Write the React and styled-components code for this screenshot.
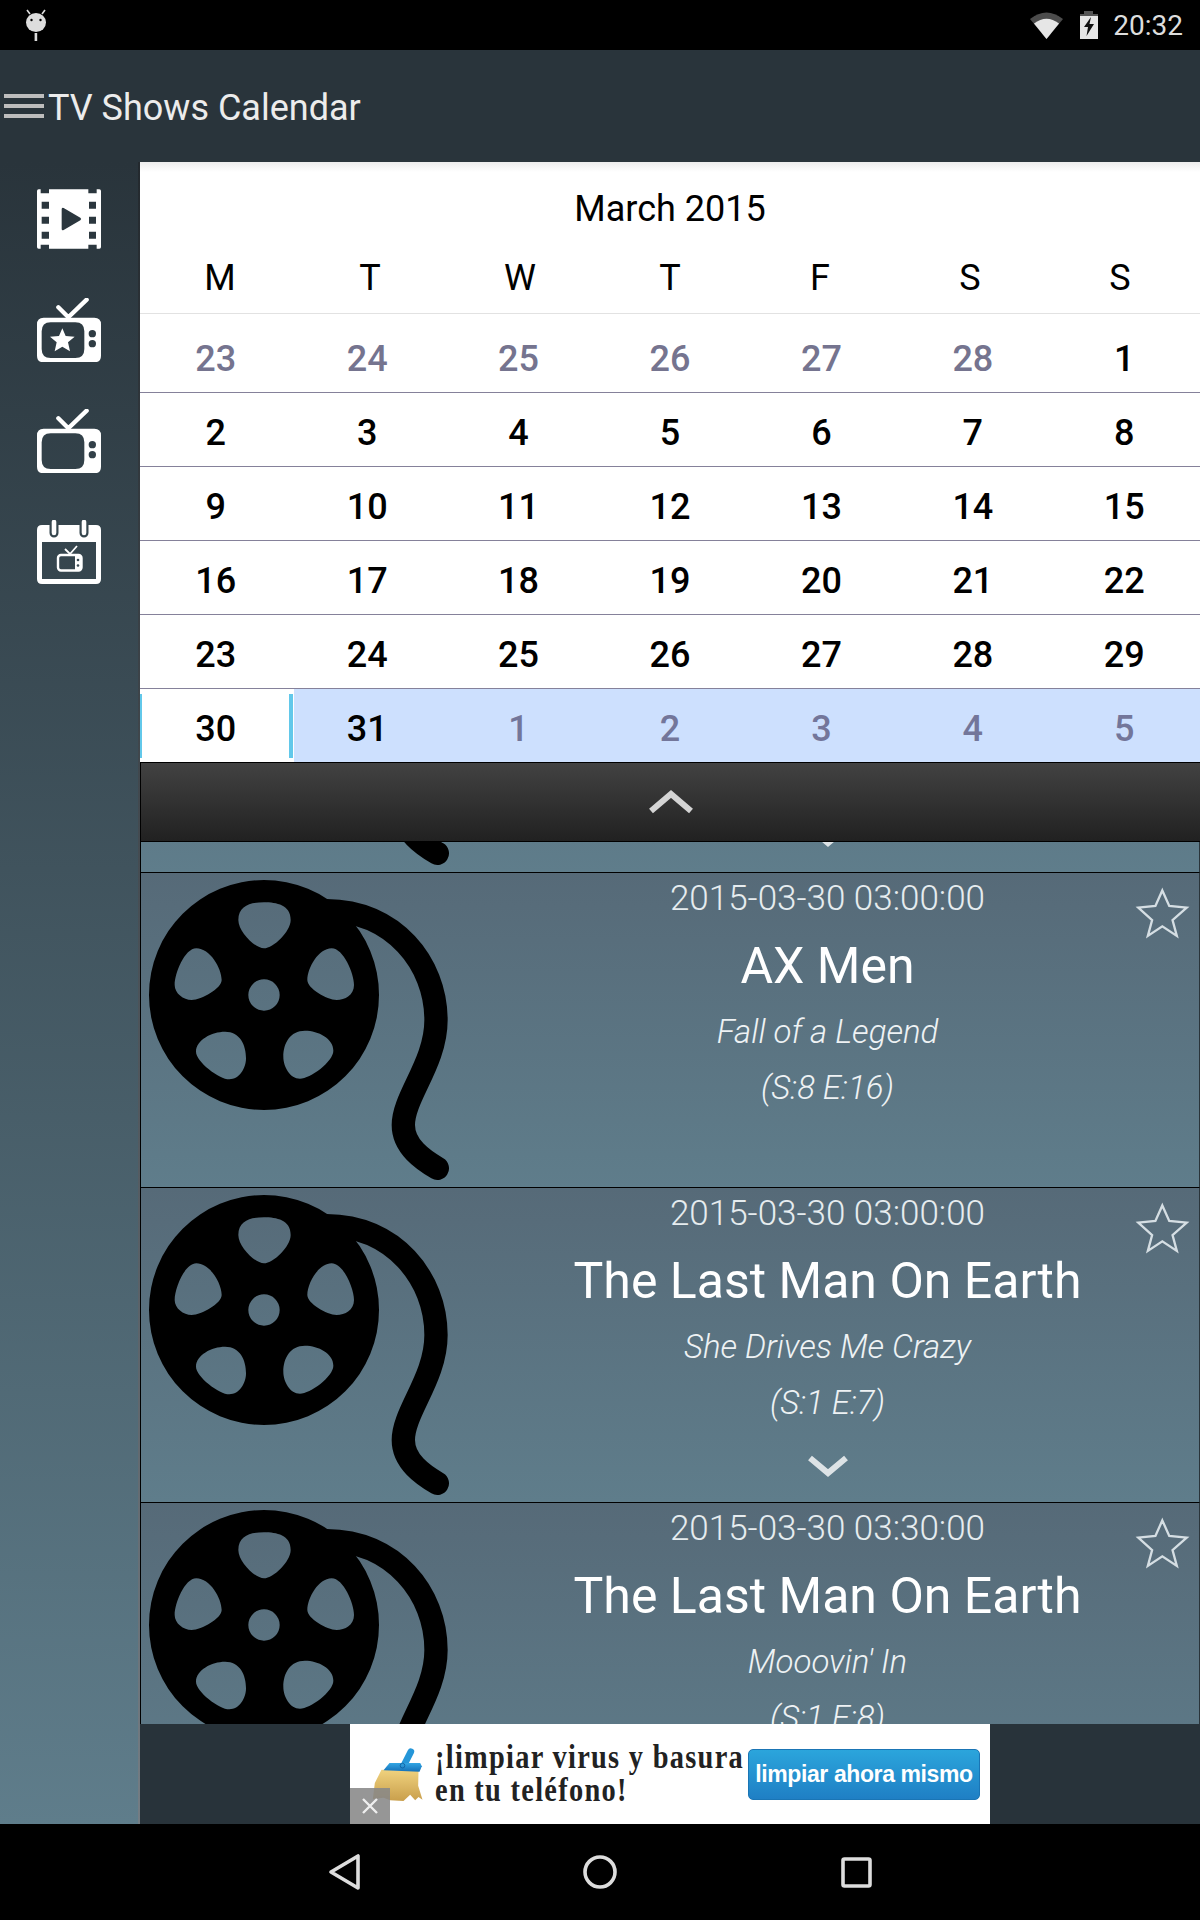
import React from 'react';
import styled, { createGlobalStyle } from 'styled-components';

const GlobalStyle = createGlobalStyle`
  * { box-sizing: border-box; }
  html, body { margin: 0; padding: 0; background: #000; }
  body { font-family: Roboto, "Noto Sans", sans-serif; }
`;

const weekdays = ['M', 'T', 'W', 'T', 'F', 'S', 'S'];

const weeks = [
  [[23, 'muted'], [24, 'muted'], [25, 'muted'], [26, 'muted'], [27, 'muted'], [28, 'muted'], [1]],
  [[2], [3], [4], [5], [6], [7], [8]],
  [[9], [10], [11], [12], [13], [14], [15]],
  [[16], [17], [18], [19], [20], [21], [22]],
  [[23], [24], [25], [26], [27], [28], [29]],
  [[30, 'today'], [31, 'first'], [1, 'next'], [2, 'next'], [3, 'next'], [4, 'next'], [5, 'next']],
];

const episodes = [
  { id: 0, date: '', title: '', name: '', code: '', more: true },
  { id: 1, date: '2015-03-30 03:00:00', title: 'AX Men', name: 'Fall of a Legend', code: '(S:8 E:16)' },
  { id: 2, date: '2015-03-30 03:00:00', title: 'The Last Man On Earth', name: 'She Drives Me Crazy', code: '(S:1 E:7)', more: true },
  { id: 3, date: '2015-03-30 03:30:00', title: 'The Last Man On Earth', name: "Mooovin' In", code: '(S:1 E:8)' },
];

const FilmIcon = () => (
  <svg width="64" height="64" viewBox="111 78 192 192">
    <path
      fill="#fff"
      fillRule="evenodd"
      d="M116 85 H122 V97 H147 V85 H265 V97 H290 V85 H298 Q303 85 303 90 V258 Q303 263 298 263 H290 V251 H265 V263 H147 V251 H122 V263 H116 Q111 263 111 258 V90 Q111 85 116 85 Z
         M125 122 V143 H147 V122 Z M125 167 V188 H147 V167 Z M125 212 V233 H147 V212 Z
         M267 122 V143 H288 V122 Z M267 167 V188 H288 V167 Z M267 212 V233 H288 V212 Z
         M185 145 V203 Q185 210 191 207 L241 178 Q246 174 241 170 L191 141 Q185 138 185 145 Z"
    />
  </svg>
);

const TvIcon = ({ star }) => (
  <svg width="64" height="64" viewBox="111 410 192 192">
    <path d="M175 438 L205 468 L260 415" fill="none" stroke="#fff" strokeWidth="13" strokeLinecap="round" />
    <path
      fill="#fff"
      fillRule="evenodd"
      d="M131 469 H283 Q303 469 303 489 V583 Q303 603 283 603 H131 Q111 603 111 583 V489 Q111 469 131 469 Z
         M152 483 Q125 483 125 510 V563 Q125 590 152 590 H226 Q253 590 253 563 V510 Q253 483 226 483 Z
         M277 506 A11 11 0 1 0 277 528 A11 11 0 1 0 277 506 Z
         M277 536 A11 11 0 1 0 277 558 A11 11 0 1 0 277 536 Z"
    />
    {star && (
      <polygon
        fill="#fff"
        points="187,501 197,524 224,526 204,543 210,570 187,556 164,570 170,543 150,526 177,524"
      />
    )}
  </svg>
);

const CalendarIcon = () => (
  <svg width="64" height="64" viewBox="37 519 64 64">
    <path
      fill="#fff"
      fillRule="evenodd"
      d="M42 524 H96 Q101 524 101 529 V578 Q101 583 96 583 H42 Q37 583 37 578 V529 Q37 524 42 524 Z M42 541 V578 H96 V541 Z"
    />
    <path d="M54 521 V532 M84 521 V532" stroke="#36464e" strokeWidth="9" strokeLinecap="round" />
    <path d="M54 521 V532 M84 521 V532" stroke="#fff" strokeWidth="4.6" strokeLinecap="round" />
    <path d="M65 548 L70 553 L77 545" fill="none" stroke="#fff" strokeWidth="1.8" />
    <rect x="58" y="554" width="23.5" height="15.5" rx="3" fill="none" stroke="#fff" strokeWidth="2.4" />
    <rect x="75" y="554" width="6" height="15" fill="#fff" />
    <circle cx="78" cy="559" r="1.3" fill="#3a4b54" />
    <circle cx="78" cy="564.5" r="1.3" fill="#3a4b54" />
  </svg>
);

const ReelIcon = () => (
  <svg width="315" height="314" viewBox="33 99 945 942">
    <path
      fillRule="evenodd"
      d="M402 120 A345 345 0 1 0 402 810 A345 345 0 1 0 402 120 Z
         M402 187 C440 187 482 195 482 240 C482 275 430 325 402 325 C375 325 325 275 325 240 C325 195 365 187 402 187 Z
         M605 325 C640 325 672 400 672 435 C672 465 645 480 620 480 C590 480 532 445 532 420 C532 385 565 325 605 325 Z
         M199 325 C164 325 134 400 134 435 C134 460 160 480 185 480 C215 480 275 445 275 420 C275 385 240 325 199 325 Z
         M525 572 C565 572 610 595 610 632 C610 665 540 716 510 716 C480 716 460 680 460 650 C460 610 480 572 525 572 Z
         M285 575 C245 575 198 600 198 635 C198 665 268 718 298 718 C328 718 348 685 348 655 C348 615 330 575 285 575 Z
         M402 418 A47 47 0 1 0 402 512 A47 47 0 1 0 402 418 Z"
    />
    <path
      d="M590 212 C790 212 918 370 918 540 C918 670 820 770 820 855 C820 920 880 960 922 985"
      fill="none"
      stroke="#000"
      strokeWidth="70"
      strokeLinecap="round"
    />
  </svg>
);

const StarIcon = () => (
  <svg width="56" height="53" viewBox="400 75 170 160">
    <polygon
      points="486,88 507,135 560,140 517,178 530,226 486,197 442,226 455,178 413,140 465,135"
      fill="none"
      stroke="#d5dee3"
      strokeWidth="7"
    />
  </svg>
);

const BrushIcon = () => (
  <svg width="57" height="60" viewBox="60 55 170 180">
    <defs>
      <linearGradient id="bristle" x1="0" y1="0" x2="0" y2="1">
        <stop offset="0" stopColor="#f0d27e" />
        <stop offset="1" stopColor="#c99f4c" />
      </linearGradient>
      <linearGradient id="head" x1="0" y1="0" x2="0" y2="1">
        <stop offset="0" stopColor="#32a6e4" />
        <stop offset="1" stopColor="#1570b8" />
      </linearGradient>
    </defs>
    <path d="M163 116 L182 78" stroke="#2596d8" strokeWidth="20" strokeLinecap="round" />
    <path
      d="M94 132 L205 136 L204 180 L217 222 L205 214 L195 224 L180 207 L160 226 L120 224 L100 216 L68 220 L74 172 Z"
      fill="url(#bristle)"
    />
    <path d="M118 112 H210 L215 122 L208 138 L100 134 Z" fill="url(#head)" />
    <circle cx="157" cy="120" r="7" fill="none" stroke="#0f5d9c" strokeWidth="2.5" />
  </svg>
);

const App = () => {
  return (
    <Screen>
      <GlobalStyle />
      <StatusBar>
        <svg width="24" height="34" viewBox="24 8 24 34">
          <path d="M30 14 L27 10 M42 14 L45 10" stroke="#ddd" strokeWidth="1.6" />
          <ellipse cx="36" cy="22.5" rx="10" ry="9.6" fill="#ddd" />
          <circle cx="31.5" cy="20" r="1.2" fill="#000" />
          <circle cx="40.5" cy="20" r="1.2" fill="#000" />
          <rect x="34.6" y="33" width="2.6" height="8" fill="#ddd" />
        </svg>
        <StatusRight>
          <svg width="33" height="29" viewBox="0 0 33 29">
            <path d="M0 8 Q16.5 -5 33 8 L16.5 28 Z" fill="#4c4c4c" />
            <path d="M4 12.5 Q16.5 3 29 12.5 L16.5 28 Z" fill="#e6e6e6" />
          </svg>
          <svg width="20" height="28" viewBox="-1 0 20 28">
            <path d="M5 0 H14 V3 H19 V28 H1 V3 H5 Z" fill="#e6e6e6" />
            <path d="M5 0 H14 V3 H19 V5 H1 V3 H5 Z" fill="#555" />
            <path d="M12 6 L5 16 H9 L7.5 25 L15 13 H10.5 Z" fill="#111" />
          </svg>
          <Clock>20:32</Clock>
        </StatusRight>
      </StatusBar>

      <Toolbar>
        <Burger>
          <span />
          <span />
          <span />
        </Burger>
        <AppTitle>TV Shows Calendar</AppTitle>
      </Toolbar>

      <Body>
        <Sidebar>
          <SideItem><FilmIcon /></SideItem>
          <SideItem><TvIcon star /></SideItem>
          <SideItem><TvIcon /></SideItem>
          <SideItem><CalendarIcon /></SideItem>
        </Sidebar>

        <Main>
          <Calendar>
            <MonthTitle>March 2015</MonthTitle>
            <WeekdayRow>
              {weekdays.map((day, i) => (
                <Weekday key={i}>{day}</Weekday>
              ))}
            </WeekdayRow>
            {weeks.map((week, i) => (
              <WeekRow key={i} $first={i === 0}>
                {week.map(([num, kind], j) => (
                  <Day key={j} $kind={kind} $low={i === 0}>{num}</Day>
                ))}
              </WeekRow>
            ))}
          </Calendar>

          <CollapseBar>
            <svg width="44" height="24" viewBox="0 0 44 24">
              <path d="M2 21 L22 4 L42 21" fill="none" stroke="#d4d4d4" strokeWidth="6" />
            </svg>
          </CollapseBar>

          <List>
            {episodes.map((ep, i) => (
              <Row key={ep.id} $offset={i === 0}>
                <ReelIcon />
                <RowText>
                  <DateLine>{ep.date}</DateLine>
                  <ShowTitle>{ep.title}</ShowTitle>
                  <EpisodeName>{ep.name}</EpisodeName>
                  <EpisodeCode>{ep.code}</EpisodeCode>
                  {ep.more && (
                    <MoreArrow width="40" height="22" viewBox="0 0 40 22">
                      <path d="M2 3 L20 18 L38 3" fill="none" stroke="#dde3e6" strokeWidth="6" />
                    </MoreArrow>
                  )}
                </RowText>
                <FavStar><StarIcon /></FavStar>
              </Row>
            ))}
          </List>

          <AdBar>
            <Ad>
              <BrushIcon />
              <AdText>
                <span>¡limpiar virus y basura</span>
                <span>en tu teléfono!</span>
              </AdText>
              <AdButton>limpiar ahora mismo</AdButton>
              <AdClose>
                <svg width="18" height="18" viewBox="0 0 18 18">
                  <path d="M2 2 L16 16 M16 2 L2 16" stroke="#eee" strokeWidth="2.4" />
                </svg>
              </AdClose>
            </Ad>
          </AdBar>
        </Main>
      </Body>

      <NavBar>
        <svg width="32" height="38" viewBox="0 0 32 38">
          <path d="M30 3 V35 L3 19 Z" fill="none" stroke="#ddd" strokeWidth="3.6" strokeLinejoin="round" />
        </svg>
        <svg width="34" height="34" viewBox="0 0 34 34">
          <circle cx="17" cy="17" r="15" fill="none" stroke="#ddd" strokeWidth="3.6" />
        </svg>
        <svg width="31" height="31" viewBox="0 0 31 31">
          <rect x="2" y="2" width="27" height="27" rx="1.5" fill="none" stroke="#ddd" strokeWidth="3.6" />
        </svg>
      </NavBar>
    </Screen>
  );
};

const Screen = styled.div`
  width: 1200px;
  height: 1920px;
  display: flex;
  flex-direction: column;
  overflow: hidden;
  background: #000;
`;

const StatusBar = styled.div`
  height: 50px;
  flex: none;
  padding: 0 17px 0 24px;
  display: flex;
  align-items: center;
  justify-content: space-between;
  background: #000;
`;

const StatusRight = styled.div`
  display: flex;
  align-items: center;
  gap: 15px;
`;

const Clock = styled.span`
  font-size: 28px;
  color: #ddd;
`;

const Toolbar = styled.header`
  height: 112px;
  flex: none;
  padding-left: 4px;
  display: flex;
  align-items: center;
  gap: 4px;
  background: #29343b;
`;

const Burger = styled.div`
  width: 40px;
  display: flex;
  flex-direction: column;
  gap: 6px;
  span {
    height: 4px;
    background: #bdbdbd;
  }
`;

const AppTitle = styled.h1`
  margin: 0;
  padding-top: 4px;
  font-size: 36px;
  font-weight: 400;
  color: #ececec;
`;

const Body = styled.div`
  flex: 1;
  min-height: 0;
  display: flex;
`;

const Sidebar = styled.nav`
  width: 140px;
  flex: none;
  padding-top: 1px;
  display: flex;
  flex-direction: column;
  background: linear-gradient(180deg, #29343b 0%, #5f7d8b 100%);
  border-right: 2px solid;
  border-image: linear-gradient(180deg, #23292e, #747d84) 1;
`;

const SideItem = styled.div`
  height: 111px;
  display: flex;
  align-items: center;
  justify-content: center;
`;

const Main = styled.main`
  flex: 1;
  min-width: 0;
  display: flex;
  flex-direction: column;
`;

const Calendar = styled.section`
  height: 600px;
  flex: none;
  background: linear-gradient(180deg, #ececec 0, #fff 10px);
`;

const MonthTitle = styled.div`
  height: 92px;
  padding-top: 2px;
  display: flex;
  align-items: center;
  justify-content: center;
  font-size: 36px;
  color: #000;
`;

const WeekdayRow = styled.div`
  height: 59px;
  padding: 2px 5px 13px 5px;
  display: grid;
  grid-template-columns: repeat(7, 150px);
`;

const Weekday = styled.div`
  display: flex;
  align-items: center;
  justify-content: center;
  font-size: 36px;
  color: #000;
`;

const WeekRow = styled.div`
  height: ${(p) => (p.$first ? '79px' : '74px')};
  display: grid;
  grid-template-columns: repeat(7, 1fr);
  border-top: 1px solid ${(p) => (p.$first ? '#e2e2e2' : '#85819a')};
`;

const dayColor = { muted: '#75748f', next: '#73769a' };
const dayBackground = { first: '#cde0fe', next: '#cde0fe' };

const Day = styled.div`
  position: relative;
  display: flex;
  align-items: center;
  justify-content: center;
  font-size: 36px;
  font-weight: 500;
  padding-top: ${(p) => (p.$low ? '11px' : '6px')};
  color: ${(p) => dayColor[p.$kind] || '#000'};
  background: ${(p) => dayBackground[p.$kind] || 'transparent'};
  ${(p) => p.$kind === 'first' && 'box-shadow: inset 3px 0 0 #fff;'}
  ${(p) =>
    p.$kind === 'today' &&
    `
    &::before, &::after {
      content: '';
      position: absolute;
      top: 5px;
      bottom: 4px;
      background: #62c8ea;
      z-index: 1;
    }
    &::before { left: 0; width: 2px; }
    &::after { right: -2px; width: 4px; }
  `}
`;

const CollapseBar = styled.div`
  height: 80px;
  flex: none;
  display: flex;
  align-items: center;
  justify-content: center;
  border: 1px solid #000;
  border-right: none;
  background: linear-gradient(180deg, #424242 0%, #212121 100%);
`;

const List = styled.div`
  flex: 1;
  min-height: 0;
  overflow: hidden;
`;

const Row = styled.article`
  position: relative;
  height: 315px;
  margin-top: ${(p) => (p.$offset ? '-285px' : '0')};
  display: flex;
  border-top: 1px solid #000;
  border-left: 1px solid #000;
  border-right: 1px solid #2a343a;
  background: linear-gradient(180deg, #566a78 0%, #5f7d8b 100%);
  & > svg {
    flex: none;
  }
`;

const RowText = styled.div`
  flex: 1;
  min-width: 0;
  display: flex;
  flex-direction: column;
  align-items: center;
  color: #fff;
`;

const DateLine = styled.div`
  height: 50px;
  line-height: 52px;
  font-size: 35px;
  font-weight: 300;
  color: #e6ecef;
`;

const ShowTitle = styled.div`
  height: 86px;
  line-height: 86px;
  font-size: 50px;
  font-weight: 400;
  color: #fff;
`;

const EpisodeName = styled.div`
  height: 46px;
  line-height: 46px;
  font-size: 33px;
  font-weight: 300;
  font-style: italic;
  color: #eef2f4;
`;

const EpisodeCode = styled(EpisodeName)`
  margin-top: 10px;
`;

const MoreArrow = styled.svg`
  margin-top: 29px;
  flex: none;
`;

const FavStar = styled.div`
  position: absolute;
  top: 13px;
  right: 9px;
  line-height: 0;
`;

const AdBar = styled.div`
  height: 100px;
  flex: none;
  display: flex;
  justify-content: center;
  background: #28333a;
`;

const Ad = styled.div`
  position: relative;
  width: 640px;
  padding: 0 10px 0 20px;
  display: flex;
  align-items: center;
  background: #fff;
  overflow: hidden;
`;

const AdText = styled.div`
  margin-left: 8px;
  width: 313px;
  flex: none;
  display: flex;
  flex-direction: column;
  font-family: "Liberation Serif", serif;
  font-size: 33px;
  font-weight: 700;
  line-height: 33px;
  letter-spacing: 1.5px;
  white-space: nowrap;
  color: #222;
  transform: scaleX(0.86);
  transform-origin: left center;
`;

const AdButton = styled.div`
  width: 232px;
  height: 51px;
  flex: none;
  display: flex;
  align-items: center;
  justify-content: center;
  border: 1px solid #1a75b5;
  border-radius: 5px;
  background: linear-gradient(180deg, #2ba5dc 0%, #1f7fc4 100%);
  font-family: "Liberation Sans", Arial, sans-serif;
  font-size: 23px;
  font-weight: 700;
  letter-spacing: -0.4px;
  color: #fff;
`;

const AdClose = styled.div`
  position: absolute;
  left: 0;
  bottom: 0;
  width: 40px;
  height: 36px;
  display: flex;
  align-items: center;
  justify-content: center;
  background: rgba(136, 136, 136, 0.88);
`;

const NavBar = styled.div`
  height: 96px;
  flex: none;
  display: grid;
  grid-template-columns: repeat(3, 256px);
  justify-content: center;
  justify-items: center;
  align-items: center;
  background: #000;
`;

export default App;
